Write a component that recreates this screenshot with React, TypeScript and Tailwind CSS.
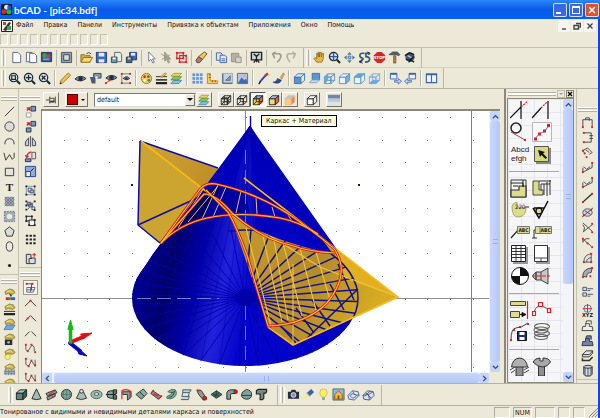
import type { ReactNode } from 'react'

const INK = '#222'
const RED = '#d8202c'
const TEAL = '#7fa39c'
const KHAKI = '#dcdc8c'

interface CubeProps {
  front: string
  top: string
  side: string
  line?: string
  wire?: boolean
}

function Cube({ front, top, side, line = INK, wire }: CubeProps) {
  return (
    <g stroke={line} strokeWidth="1" strokeLinejoin="round">
      <path d="M1.5 5.5h7v7h-7z" fill={front} />
      <path d="M1.5 5.5l3.500-3.500h7.500l-4 3.500z" fill={top} />
      <path d="M8.500 5.500l4-3.500v7l-4 3.500z" fill={side} />
      {wire && <path d="M5 2v7l-3.500 3.500M5 9h7.500" fill="none" />}
    </g>
  )
}

function Magnifier({ children }: { children?: ReactNode }) {
  return (
    <g fill="none" stroke="#1c2833">
      <circle cx="6" cy="6" r="4.500" fill="#dce6e6" strokeWidth="1.300" />
      <path d="M9.500 9.500L13 13" strokeWidth="2.200" />
      {children}
    </g>
  )
}

function Eye({ x = 0, y = 0 }: { x?: number; y?: number }) {
  return (
    <g transform={`translate(${x} ${y})`}>
      <path d="M1 7.500Q6.500 2 13 7Q7 12 1 7.500z" fill="#7c8890" stroke="#333" />
      <circle cx="7" cy="7.300" r="2.400" fill="#1d2e4a" />
    </g>
  )
}

function Squares({ points }: { points: number[][] }) {
  return (
    <>
      {points.map(([x, y]) => (
        <rect key={`${x}-${y}`} x={x - 1} y={y - 1} width="2" height="2" fill={RED} />
      ))}
    </>
  )
}

function Brush({ children }: { children: ReactNode }) {
  return (
    <>
      {children}
      <path d="M2 4l5-3 4 1 2 3-3 2-4-1-3 1z" fill="#c9b24a" stroke="#6b5a20" strokeWidth=".6" />
      <path d="M4 4l4-1 2 2" stroke="#f6e9a0" fill="none" />
    </>
  )
}

const ICONS: Record<string, ReactNode> = {
  new: <path d="M3 1.500h5.500l3 3v8h-8.500z" fill="#fff" stroke="#54657c" />,
  template: (
    <g fill="#fff" stroke="#54657c">
      <path d="M1.500 1.500h6v10h-6z" />
      <path d="M5 2.500h5l2.500 2.500v7.500h-7.500z" />
    </g>
  ),
  picture: (
    <>
      <path d="M1.500 1.500h11v10h-11z" fill="#30508c" stroke="#2c3440" />
      <circle cx="5" cy="5" r="2.500" fill="#4b9a4c" />
      <path d="M7 4h4v4h-4z" fill="#d23a2c" />
      <path d="M3 8h7v2h-7z" fill="#58a7e0" />
    </>
  ),
  frame: (
    <>
      <path d="M1.500 1.500h11v11h-11z" fill="#8ea0ad" stroke="#4a5560" />
      <path d="M4 4h6v6h-6z" fill="#dcdcdc" stroke="#3a4550" />
    </>
  ),
  open: (
    <>
      <path d="M1 4h4l1 1h5v7h-10z" fill="#d9ac3c" stroke="#93701c" />
      <path d="M1 12l3-5h9.500l-3 5z" fill="#f7dc7c" stroke="#93701c" />
      <path d="M7 3q2.500-2.500 5 0" stroke="#345" fill="none" />
    </>
  ),
  save: (
    <>
      <path d="M1.500 1.500h11v11h-11z" fill="#4068c0" stroke="#243c78" />
      <path d="M4 2h6v4h-6zM4 9h6v3.500h-6z" fill="#e6ecf6" />
    </>
  ),
  saveDoc: (
    <>
      <path d="M5 1.500h6l1.500 2v8h-7.500z" fill="#e8f0dc" stroke="#54657c" />
      <path d="M1.500 6.500h6v6h-6z" fill="#6f97a8" stroke="#2c4a60" />
      <path d="M3 7h3v2h-3z" fill="#fff" />
    </>
  ),
  saveAll: (
    <>
      <path d="M5 1.500h7.500v8h-7.500z" fill="#4068c0" stroke="#243c78" />
      <path d="M6.500 2h4.500v3h-4.500z" fill="#e6ecf6" />
      <path d="M1.500 6.500h6v6h-6z" fill="#4a6a90" stroke="#1c3454" />
      <path d="M3 7h3v2h-3z" fill="#d8e070" />
    </>
  ),
  cursor: <path d="M4 1v10l2.500-2 2 4 1.500-1-2-3.500h3z" fill="#fff" stroke="#6a7a8c" />,
  cursorOff: (
    <>
      <path d="M5 1v10l2-2 2 4 1.500-1-2-3.500h3z" fill="#aaa79a" stroke="#9a978a" />
      <path d="M1 3l9 6M2 9l9-5" stroke="#9a978a" />
    </>
  ),
  groupPick: (
    <>
      <path d="M2 2h7v6h-7zM5 5h7v7h-7z" fill="none" stroke={RED} strokeWidth="1.200" />
      <Squares points={[[2, 2], [9, 2], [2, 8], [12, 5], [12, 12], [5, 12], [9, 8]]} />
    </>
  ),
  eraser: (
    <>
      <path d="M1 10l3-4 4 3-3 3.500h-3z" fill="#c0766a" stroke="#444" />
      <path d="M4 6l6-5 3 2-5 6z" fill="#f2c95a" stroke="#6b5420" />
    </>
  ),
  copy: (
    <g fill="#dfe9fa" stroke="#3f64a4">
      <path d="M1.500 2h5l1.500 2v6h-6.500z" />
      <path d="M5.500 4.500h5l2 2v6h-7z" />
      <path d="M7 8.500h4M7 10.500h4" />
    </g>
  ),
  paste: (
    <g fill="#b5b2a4" stroke="#959284">
      <path d="M1.500 2.500h8v9h-8z" />
      <path d="M6 6.500h6v6h-6z" fill="#d4d1c4" />
    </g>
  ),
  screen: (
    <>
      <path d="M1.500 1.500h11v8h-11z" fill="#cfd6da" stroke={INK} strokeWidth="1.500" />
      <path d="M4 3l3 3 3-3M7 6v6M4 12.500l3-4 3 4" stroke={INK} fill="none" strokeWidth="1.400" />
    </>
  ),
  undo: <path d="M3 3h7q2.500 1 1.500 4t-4 5M6 1l-3 2 2 5" stroke="#a09d90" strokeWidth="1.800" fill="none" />,
  redo: <path d="M11 3h-7q-2.500 1-1.500 4t3 5M8 1l3 2-2 5" stroke="#b5b2a5" strokeWidth="1.800" fill="none" />,
  hand: (
    <path
      d="M4 12l-3-4 1-1 2 1.500v-6h1.500v4-5h1.500v5l.5-5h1.500v5l1-4h1.500l-.500 6-1.500 3.500z"
      fill="#e8b84c"
      stroke="#8a6418"
      strokeWidth=".8"
    />
  ),
  zoomLive: (
    <Magnifier>
      <path d="M6 2v8M2 6h8" stroke="#2858b0" strokeWidth="1.500" />
    </Magnifier>
  ),
  move: (
    <>
      <path d="M7 1l2.500 3h-5zM7 13l2.500-3h-5zM1 7l3-2.500v5zM13 7l-3-2.500v5z" fill="#5478a8" />
      <path d="M5.500 5.500h3v3h-3z" fill="#a9bcd4" stroke="#5478a8" />
    </>
  ),
  spin: (
    <g stroke="#3c5878" strokeWidth="1.800" fill="none">
      <path d="M7 2.500q-5-.5-5 2t2.500 3-1.500 4h-2M12.500 2.500h-4v3.500q4 0 4 3t-5 3" />
      <path d="M4 9l-2 3 3 1M10 1l3 1.500-2 2" stroke="#223" strokeWidth="1" />
    </g>
  ),
  stop: (
    <>
      <path d="M4.500 1h5l3.500 3.500v5l-3.500 3.500h-5l-3.500-3.500v-5z" fill="#d2282e" />
      <text x="7" y="8.500" fontSize="4.500" fontWeight="bold" textAnchor="middle" fill="#fff">STOP</text>
    </>
  ),
  hammer: (
    <>
      <path d="M1 4l4-3h5l3 3-2 1-2-1h-8z" fill="#55606a" stroke="#2c3238" strokeWidth=".6" />
      <path d="M6 5h2.500v8h-2.500z" fill="#b08040" stroke="#5c4020" strokeWidth=".6" />
    </>
  ),
  binder: (
    <>
      <circle cx="7.500" cy="6.500" r="5" fill="#46586a" />
      <path d="M2 5l5-3 5 2M3 9l4 1 5-4M6 12l3-2 3 2" stroke="#16202a" fill="none" strokeWidth="1.500" />
      <path d="M5 5l4 2" stroke="#bccad4" strokeWidth="1.500" />
    </>
  ),
  zoomWindow: (
    <Magnifier>
      <path d="M4 4h4v4h-4z" strokeWidth="1.200" />
    </Magnifier>
  ),
  zoomAll: (
    <Magnifier>
      <path d="M6 3v6M3 6h6" strokeWidth="1.400" />
    </Magnifier>
  ),
  zoomFit: (
    <Magnifier>
      <path d="M4 4l4 4M8 4l-4 4" strokeWidth="1.400" />
    </Magnifier>
  ),
  pencil: (
    <>
      <path d="M1 13l1-4 8-8 2.500 2.500-8 8z" fill="#f0c04c" stroke="#8a6416" strokeWidth=".8" />
      <path d="M1 13l.5-2 1.500 1.500z" fill="#222" />
    </>
  ),
  eye: <Eye />,
  eyeBox: (
    <>
      <path d="M5 1.500h8v5h-8z" fill="#8494a4" stroke="#3c4854" />
      <path d="M1 5.500h6v7h-4z" fill="#4a5a6a" />
      <circle cx="8" cy="6" r="1.500" fill="#dce4ec" />
    </>
  ),
  eyeNode: (
    <>
      <Eye x={1} y={-1} />
      <path d="M2 12l4-3" stroke={RED} />
      <Squares points={[[2, 12], [6, 9]]} />
    </>
  ),
  eyeAxis: (
    <>
      <path d="M3 2v10h10M3 2h9" stroke="#777" fill="none" />
      <path d="M4.500 7q4-4 7 0-3 3-7 0z" fill="#7c8890" stroke="#333" />
      <circle cx="8" cy="7" r="1.200" fill="#1d2e4a" />
      <Squares points={[[3, 2], [3, 12], [12, 12], [12, 2]]} />
    </>
  ),
  palette: (
    <>
      <circle cx="7" cy="7" r="5.500" fill="#f0cc5c" stroke="#96742a" />
      <circle cx="5" cy="5" r="1.400" fill="#c83434" />
      <circle cx="9" cy="5" r="1.400" fill="#3864b8" />
      <circle cx="9.500" cy="9" r="1.400" fill="#2e8c4c" />
      <circle cx="5" cy="9" r="1.300" fill="#fff" />
    </>
  ),
  lineWeight: (
    <>
      <path d="M1 5h12" stroke={INK} />
      <path d="M1 8.500h12" stroke={INK} strokeWidth="1.600" />
      <path d="M1 12h12" stroke={INK} strokeWidth="2.400" />
      <path d="M6 5l5-4 1.500 1-5 4z" fill="#f0c04c" stroke="#8a6416" strokeWidth=".6" />
    </>
  ),
  layers: (
    <g strokeWidth=".7">
      <path d="M1 12.500l3-3.500h8.500l-3 3.500z" fill="#7cc4e8" stroke="#2c6c94" />
      <path d="M1 8.500l3-3.500h8.500l-3 3.500z" fill="#84c860" stroke="#3c7c28" />
      <path d="M1 4.500l3-3h8.500l-3 3z" fill="#e8d860" stroke="#8c8428" />
    </g>
  ),
  grid: (
    <>
      <path d="M1.500 1.500h11v11h-11z" fill="#6c94cc" />
      <path d="M1 5h12M1 9h12M5 1v12M9 1v12" stroke="#e6eefa" />
    </>
  ),
  ruler: (
    <>
      <path d="M1.500 1.500h3v8h8v3h-11z" fill="#f4cc60" stroke="#c08820" />
      <path d="M3 3h2M3 6h2M7 9v2M10 9v2" stroke="#7c5a18" />
    </>
  ),
  image1: (
    <>
      <path d="M1.500 1.500h11v11h-11z" fill="#c4d2dc" stroke="#9cacbc" />
      <path d="M2 2v10h10" stroke="#3c5068" fill="none" />
      <path d="M5 9l5-5v5z" fill="#8c9cb0" stroke="#5c7088" />
    </>
  ),
  image2: (
    <>
      <path d="M1.500 1.500h11v11h-11z" fill="#b0c8e8" stroke="#4c6c9c" />
      <path d="M2 12l4-6 3 3 2-2 1.500 5z" fill="#3c6cb0" />
      <circle cx="9" cy="4" r="1.600" fill="#f4a468" />
    </>
  ),
  dropper: (
    <>
      <path d="M3 11l6-7" stroke="#284c9c" strokeWidth="2" />
      <path d="M8 3l3-2.500 1.500 2-3 3z" fill="#d42c28" />
      <path d="M2 13l1.500-2.500" stroke={INK} strokeWidth="1.500" />
    </>
  ),
  paint: (
    <>
      <path d="M9 6l3-5 1.500 1-3 6z" fill="#e8b848" stroke="#7c5a18" strokeWidth=".5" />
      <path d="M1 11q4 0 5-4l4 2q-2 5-9 2z" fill="#2c4c9c" stroke="#162c60" strokeWidth=".6" />
    </>
  ),
  viewFront: <Cube front="#5c94d0" top="#dcecf8" side="#dcecf8" line="#3c74ac" />,
  viewBack: (
    <>
      <path d="M4.500 1.500h8v7h-8z" fill="#5c94d0" stroke="#3c74ac" />
      <path d="M1.500 11.500l3-3h8l-3 3z" fill="#c4daf0" stroke="#7ca4d0" />
    </>
  ),
  viewLeft: (
    <>
      <Cube front="none" top="none" side="none" line="#5c94c4" wire />
      <path d="M1.500 5.500l3.500-3.500v7l-3.500 3.500z" fill="#6ca4dc" />
    </>
  ),
  viewRight: <Cube front="#e8f4fc" top="#e8f4fc" side="#7cb0e0" line="#5c94c4" />,
  viewTop: <Cube front="#e8f4fc" top="#6ca4dc" side="#e8f4fc" line="#5c94c4" />,
  viewBottom: (
    <>
      <Cube front="none" top="none" side="none" line="#7cacd4" wire />
      <path d="M1.500 12.500l3.500-3.500h7.500l-4 3.500z" fill="#6ca4dc" />
    </>
  ),
  windowNext: (
    <>
      <path d="M1.500 1.500h7v6h-7z" fill="#e8f0fc" stroke="#3c64a8" />
      <path d="M1.500 2h7" stroke="#3c64a8" strokeWidth="2" />
      <path d="M6 9h4v-2l3.500 3-3.500 3v-2h-4z" fill="#bcd4f0" stroke="#3c64a8" strokeWidth=".8" />
    </>
  ),
  windowPrev: (
    <>
      <path d="M5.500 1.500h7v6h-7z" fill="#e8f0fc" stroke="#3c64a8" />
      <path d="M5.500 2h7" stroke="#3c64a8" strokeWidth="2" />
      <path d="M8 9h-4v-2l-3.500 3 3.500 3v-2h4z" fill="#bcd4f0" stroke="#3c64a8" strokeWidth=".8" />
    </>
  ),
  tile: (
    <>
      <path d="M1.500 2.500h11v9h-11zM7 2v9" fill="#eef4fc" stroke="#3c64a8" strokeWidth="1.200" />
      <path d="M1 2.500h12" stroke="#3c64a8" strokeWidth="2" />
    </>
  ),
  pin: (
    <g stroke="#333" fill="none">
      <path d="M1 7h4M5.500 3v8M5.500 5h5v4.500h-5M12 3v8" />
      <path d="M6 8.500h5" strokeWidth="1.500" />
    </g>
  ),
  cubeWire: (
    <>
      <Cube front="none" top="none" side="none" wire />
      <path d="M1.500 9h7l4-4M5 5.500v7M3 4h7v7" stroke={INK} fill="none" strokeWidth=".7" />
    </>
  ),
  cubeFrame: <Cube front="none" top="none" side="none" wire />,
  cubeBoth: <Cube front="#f4d030" top="#70b0e0" side="#e85c38" wire />,
  cubeSolid: <Cube front="#f4d878" top="#a0c0e8" side="#ec6438" />,
  cubeSoft: <Cube front="#fcd080" top="#a8c8e8" side="#f08058" line="#f0b878" />,
  cubeEmpty: <Cube front="#fff" top="#fff" side="#eee" />,
  shade: (
    <>
      <path d="M0 1h14v12h-14z" fill="#b8c8d4" />
      <path d="M0 1h14v4h-14z" fill="#7484a4" />
      <path d="M0 9h14v4h-14z" fill="#dce4e4" />
    </>
  ),
  line: <path d="M2 12l10-10" stroke="#333" />,
  circle: <circle cx="7" cy="7" r="5" fill="#dcdcd4" stroke="#3c3c3c" />,
  arc: <path d="M2 10q0-6 5-6t5 6" stroke="#333" fill="none" />,
  poly: <path d="M1 3l2 8 4-6 3 5 2-2v-5" stroke="#333" fill="none" />,
  rect: <path d="M2.500 3.500h9v8h-9z" stroke="#333" fill="#e4e4dc" />,
  text: <text x="7" y="11.500" textAnchor="middle" fontSize="12" fontWeight="bold" fontFamily="Liberation Serif, serif" fill="#222">T</text>,
  hatch: (
    <>
      <path d="M2 2h10v10h-10z" fill="#a0a8b4" />
      <path d="M2 2l10 10M5 2l7 7M9 2l3 3M2 5l7 7M2 9l3 3M12 2l-10 10M9 2l-7 7M12 5l-7 7M12 9l-3 3M5 2l-3 3" stroke="#56606e" strokeWidth=".6" />
    </>
  ),
  hatchHole: (
    <>
      <path d="M1.500 1.500h11v11h-11z" fill="#9ca8bc" stroke="#5c6c84" strokeDasharray="1.500 1.500" />
      <circle cx="7" cy="7" r="3" fill="#ece9d8" />
    </>
  ),
  penta: <path d="M7 2l5 4-2 6h-6l-2-6z" stroke="#333" fill="#dcdcd4" />,
  ellipse: <ellipse cx="7" cy="7" rx="3.500" ry="5" stroke="#333" fill="#eceadc" />,
  dot: <circle cx="7" cy="7" r="1.700" fill="#222" />,
  copyObj: (
    <>
      <path d="M7.500 1.500h5v5h-5z" fill="#7c94c0" stroke="#26344c" />
      <path d="M2.500 8.500h5v4.500h-5z" fill="#fff" stroke="#999" />
      <path d="M3 6l3-3M3 3h3v3" stroke={RED} strokeWidth="1.400" fill="none" />
    </>
  ),
  moveObj: (
    <>
      <path d="M7.500 1.500h5v5h-5zM2.500 8.500h5v4.500h-5z" fill="#7c94c0" stroke="#26344c" />
      <path d="M3 6l3-3M3 3h3v3" stroke={RED} strokeWidth="1.400" fill="none" />
    </>
  ),
  mirror: (
    <>
      <path d="M5 3v8.500h-3.500v-4zM9 3v8.500h3.500v-4z" fill="#c4ccd8" stroke="#3c4654" />
      <path d="M7 1v12" stroke="#555" />
    </>
  ),
  rotate: (
    <>
      <path d="M8.500 2.500h4v7h-4z" fill="#e4e4e4" stroke="#555" />
      <path d="M1.500 9.500h6v3h-6z" fill="#7c94c0" stroke="#26344c" />
      <path d="M3 8q0-5 5-6M1.500 5.500l1.500 2.500 2-1.500" stroke={RED} fill="none" strokeWidth="1.200" />
    </>
  ),
  scale: (
    <>
      <path d="M1.500 1.500h11v11h-11z" fill="#90acdc" stroke="#26447c" />
      <path d="M2 7h5v5.500h-5z" fill="#e4ecf8" stroke="#26447c" />
      <path d="M7.500 6.500l3-3" stroke={INK} />
    </>
  ),
  group: (
    <g stroke={INK} fill="none">
      <path d="M2.500 2.500h9v9h-9z" stroke="#8894a8" />
      <path d="M4.500 4.500h4v4h-4z" stroke="#3c5078" />
      <path d="M6.500 6.500h4v3h-4z" fill="#a8b4cc" stroke="#3c5078" />
      <path d="M1.500 2.500h2M10.500 2.500h2M1.500 11.500h2M10.500 11.500h2" strokeWidth="2" />
    </g>
  ),
  ungroup: (
    <g stroke="#3c5078" fill="none">
      <path d="M3.500 3.500h4v3h-4zM5 5.500h4v3h-4z" fill="#a8b4cc" />
      <path d="M8.500 8.500h3v3h-3z" />
      <path d="M1.500 2.500h2M1.500 11.500h2M10.500 2.500h2M10.500 12h2M1.500 7h2" stroke={INK} strokeWidth="2" />
      <path d="M10 4l-3 2M4 11l2-2" />
    </g>
  ),
  regroup: (
    <g stroke={INK} fill="none">
      <path d="M2.500 2.500h6v5h-6z" />
      <path d="M5.500 6.500h6v6h-6z" fill="#f4f4f0" />
      <path d="M1.500 2.500h2M7.500 2.500h2M1.500 7.500h2M4.500 12h2M10.500 12h2M10.500 6.500h2" strokeWidth="2" />
    </g>
  ),
  array: (
    <path
      d="M2 3h2.500M6 3h2.500M10 3h2.500M2 7h2.500M6 7h2.500M10 7h2.500M2 11h2.500M6 11h2.500M10 11h2.500"
      stroke={INK}
      strokeWidth="2"
    />
  ),
  insert: (
    <>
      <path d="M2.500 2.500h5v4h4.500v6h-9.500z" fill="#d4dce4" stroke="#333" />
      <path d="M5.500 12v-5h3" stroke="#333" fill="none" />
      <path d="M11 1v4M9 3h4" stroke={RED} strokeWidth="1.200" />
    </>
  ),
  snapGrid: (
    <>
      <path d="M3 7h9l-2 5h-7zM7 7v5M3 9.500h8" fill="none" stroke="#58687c" />
      <path d="M2 3h8M8 3v7" stroke="#444" />
      <Squares points={[[3, 3], [9, 3]]} />
    </>
  ),
  snapEnd: (
    <>
      <path d="M1 11l6-6 6 6" stroke="#333" fill="none" />
      <Squares points={[[7, 5]]} />
    </>
  ),
  snapMid: (
    <>
      <path d="M1 11l6-6 6 6" stroke="#333" fill="none" />
      <Squares points={[[4, 8]]} />
    </>
  ),
  snapNear: <path d="M1 11l5-5M8 6l5 5" stroke="#333" fill="none" />,
  snapCurve: (
    <>
      <path d="M2 4v5q1 3 3 1l3-5q2-1 3 2v4" stroke="#555" fill="none" />
      <Squares points={[[2, 4], [4, 11], [8, 4], [12, 12]]} />
    </>
  ),
  snapNode: (
    <>
      <path d="M2 3v6l3 2 3-6 4 6v-7" stroke="#555" fill="none" />
      <Squares points={[[2, 3], [5, 11], [8, 5], [12, 10]]} />
    </>
  ),
  brushColor: (
    <Brush>
      <path d="M3 10h4v3h-4z" fill={RED} />
      <path d="M6 10h4v3h-4z" fill="#3ca048" />
      <path d="M9 10h4v3h-4z" fill="#3058c8" />
      <path d="M7 5l2 4" stroke="#444" strokeWidth="2" />
    </Brush>
  ),
  brushLine: <Brush><path d="M1 9h12" stroke={INK} /><path d="M1 12h12" stroke={INK} strokeWidth="2.400" /></Brush>,
  brushLayer: <Brush><path d="M1 12.500l3-5h9l-3 5z" fill="#6ca8e4" stroke="#2c64a4" strokeWidth=".7" /></Brush>,
  brushCam: <Brush><path d="M2 7h8v6h-8z" fill="#26303c" /><circle cx="6" cy="10" r="1.500" fill="#aab" /></Brush>,
  brushLamp: <Brush><circle cx="5" cy="9.500" r="3" fill="#f8f060" stroke="#b0a030" strokeWidth=".6" /></Brush>,
  brushHatch: (
    <Brush>
      <path d="M1 7h12v6h-12z" fill="#b8c0c8" />
      <path d="M1 9h12M1 11h12M3 7v6M6 7v6M9 7v6M12 7v6" stroke="#667080" strokeWidth=".7" />
    </Brush>
  ),
  dimHor: (
    <>
      <path d="M2 12v-8h10v8M5 4v-2h4v3" stroke="#444" fill="none" />
      <Squares points={[[2, 12], [12, 12]]} />
    </>
  ),
  dimVer: (
    <>
      <path d="M3 2h8v10h-8M9 5h4M9 8h4" stroke="#444" fill="none" />
      <Squares points={[[3, 2], [3, 12]]} />
    </>
  ),
  dimRot: (
    <>
      <path d="M2 5l5-3 5 5M2 5l2 3M5 4l4 3M12 7l-3 2" stroke="#444" fill="none" />
      <Squares points={[[2, 5], [4, 8], [6, 12]]} />
    </>
  ),
  dimSlope: (
    <>
      <path d="M2 7v5l10-5v-5M3 6l3 3M6 9l4-3" stroke="#444" fill="none" />
      <Squares points={[[2, 12], [12, 2]]} />
    </>
  ),
  dimLine: (
    <>
      <path d="M2 12l10-9" stroke="#222" strokeWidth="1.300" />
      <Squares points={[[2, 12], [12, 3]]} />
    </>
  ),
  dimDia: (
    <>
      <ellipse cx="7" cy="7" rx="5" ry="4" fill="#d0d4dc" stroke="#555" />
      <path d="M1 12l12-10M4 5l6 4" stroke="#444" />
      <Squares points={[[3, 10], [11, 4]]} />
    </>
  ),
  dimAngle: (
    <>
      <path d="M2 2l10 9M2 12l10-8M2 4q3 3 1 7" stroke="#444" fill="none" />
      <Squares points={[[12, 3], [12, 12]]} />
    </>
  ),
  dimRadius: (
    <>
      <path d="M2 7q1-5 7-4M3 4l8 7M2 2v4" stroke="#444" fill="none" />
      <Squares points={[[7, 8], [12, 12], [2, 3]]} />
    </>
  ),
  dimArc: (
    <>
      <path d="M3 12q0-8 8-9v9zM6 12q0-4 5-5" stroke="#555" fill="#e0e0dc" />
      <Squares points={[[3, 12], [11, 3], [11, 12]]} />
    </>
  ),
  dimArc2: (
    <>
      <path d="M2 11q0-8 10-9l-1 5q-5 0-5 5z" stroke="#444" fill="#a4acb8" />
      <Squares points={[[2, 12], [12, 2], [10, 11]]} />
    </>
  ),
  props: (
    <g stroke="#44546c" fill="#d4dcec">
      <path d="M2 2.500h4v3.500h-4zM2 8.500h4v3.500h-4z" />
      <path d="M7 4h6M7 10h6M7 6h3M7 12h3" />
    </g>
  ),
  xyz: (
    <>
      <circle cx="7" cy="5" r="4" fill="none" stroke="#4c70a8" />
      <path d="M7 0v9M2 5h10" stroke={RED} />
      <text x="7" y="14" textAnchor="middle" fontSize="6" fontWeight="bold" fill="#222">XYZ</text>
    </>
  ),
  stamp: <path d="M5 5h4v3h3l1 4.500h-12l1-4.500h3zM5 5l1-3h5v4" stroke="#444" fill="#f0eee4" />,
  stampDark: <path d="M5 5h4v3h3l1 4.500h-12l1-4.500h3zM5 5l1-3h5v4" stroke="#26344c" fill="#7484a8" />,
  slab: (
    <>
      <path d="M1.500 6l4-4h7l-3.500 4zM1.500 6v2.500h7.500l3.500-4v-2.500" fill="#dce0e8" stroke="#333" />
      <path d="M1.500 10v2.500h7.500l3.500-4" fill="none" stroke="#333" strokeWidth="1.600" />
    </>
  ),
  barrel: (
    <>
      <path d="M3 3v8l2 2h5l2-2v-8z" fill="#8894a8" stroke="#333" />
      <ellipse cx="7.500" cy="3" rx="4.500" ry="1.600" fill="#c4ccd8" stroke="#333" />
      <path d="M6 5v7M9 5v7" stroke="#e0e6f0" />
    </>
  ),
  box3d: <Cube front="#5c8480" top="#a4c4bc" side="#3c5c58" />,
  cone3d: <path d="M7 1l-5 10.500q5 2 10 0z" fill="#a4bcb4" stroke={INK} />,
  plate3d: (
    <>
      <path d="M1 6l10-4 2 3-10 4zM2 10l9-4v3l-8 4z" fill={TEAL} stroke="#333" />
      <path d="M2 9l9-6M4 4l5 6" stroke={RED} />
    </>
  ),
  sphere3d: (
    <>
      <circle cx="7" cy="7" r="5.500" fill="#7ca49c" stroke="#333" />
      <path d="M7 1.500v11M2 7h10M4 3q-2 4 0 8M10 3q2 4 0 8" stroke="#486c64" fill="none" strokeWidth=".7" />
    </>
  ),
  frustum3d: (
    <>
      <path d="M5 4l-3.500 7q5.500 3 11 0l-3.500-7z" fill="#a8bcb8" stroke="#333" />
      <circle cx="7" cy="3.500" r="2" fill="#dce6e0" stroke="#333" />
    </>
  ),
  torus3d: (
    <>
      <ellipse cx="7" cy="7" rx="6" ry="4.500" fill="#a0b8b4" stroke="#48605c" />
      <ellipse cx="7" cy="6.500" rx="2.500" ry="1.500" fill="#ece9d8" stroke="#48605c" />
    </>
  ),
  lathe3d: (
    <>
      <path d="M6 3h3v8h-3q-4 0-4-4t4-4z" fill={TEAL} stroke={INK} />
      <path d="M9 2h3.500v4l-2 1 2 1v4h-3.500z" fill="#58746e" stroke={INK} />
      <path d="M1 7h10" stroke={INK} />
    </>
  ),
  sweep3d: (
    <>
      <path d="M3 4l8 0v7l-3 2v-6h-5z" fill={TEAL} stroke="#333" />
      <path d="M2 12v-9q5-3 10 1v6" stroke={RED} fill="none" strokeWidth="1.200" />
    </>
  ),
  ext3d: (
    <>
      <path d="M1 7l4-3 5 5-3 3z" fill={TEAL} stroke="#333" />
      <path d="M5 4l4-3 4 5-3 3z" fill="#8cb0a8" stroke="#333" />
    </>
  ),
  loft3d: (
    <>
      <path d="M3 3l9 6-3 3-8-6z" fill={TEAL} stroke="#333" />
      <path d="M1 6l3-4M9 12l4-4M4 6l5 3" stroke={RED} strokeWidth="1.500" />
    </>
  ),
  mesh3d: (
    <>
      <path d="M3 4q4-4 8-2 3 4-1 8-4 3-8 1-1-2 2-3t3-2-4-2z" fill={TEAL} stroke="#48706a" />
      <path d="M4 10q5 0 6-6M6 5q4 0 5-2" stroke="#2c4c48" fill="none" />
    </>
  ),
  spring3d: (
    <path d="M3 2h9l-2 3h-7zM3 5l-1 4h8l-1 3.500h-8M10 5l-1 4" fill="#c4d4d8" stroke="#3c5864" />
  ),
  bolt3d: (
    <>
      <path d="M2 2l5 1 5 8-3 2-5-6z" fill={TEAL} stroke="#333" />
      <circle cx="10.500" cy="11" r="2.200" fill={RED} stroke="#511" strokeWidth=".6" />
      <path d="M2 4l4-2" stroke={RED} strokeWidth="1.500" />
    </>
  ),
  surf3d: <path d="M1 7l6-4 6 4-6 4zM7 3l-1 8M3 6l7 3M10 5l-6 4" fill="#4c6c64" stroke="#26423c" />,
  pipe3d: (
    <>
      <path d="M2 12v-7q1-3 4-3h5v4h-4q-1 0-1 2v4z" fill={TEAL} stroke={INK} />
      <circle cx="11.500" cy="4" r="2" fill={RED} stroke="#511" strokeWidth=".6" />
    </>
  ),
  blob3d: <path d="M7 1.500q6 1 5.500 6t-6 4.500q-5-1-5-4.500t5.500-6zM2 8h10" fill={TEAL} stroke="#333" />,
  text3d: <path d="M1.500 3l2-1.500h9v2.500l-1 1.500h-2v5.500l-1.500 1.500h-2.500v-6h-4z" fill="#6c8c84" stroke={INK} strokeWidth="1.200" />,
  camera: (
    <>
      <path d="M1 4h3l1-2h4l1 2h3v7.500h-12z" fill="#26303c" />
      <circle cx="7" cy="7.500" r="2.600" fill="#8494a4" stroke="#dde" />
    </>
  ),
  spot: (
    <>
      <path d="M6 5l4-3.500 2.500 3-4.500 4z" fill="#3c5cc8" stroke="#1c3484" strokeWidth=".6" />
      <path d="M1 12.500l3-7 4 3z" fill="#f4f080" />
      <path d="M5 5l4 4" stroke="#8898b8" strokeWidth="1.400" />
    </>
  ),
  bulb: (
    <>
      <path d="M7 1q4 0 4 4 0 2-2.500 5h-3q-2.500-3-2.500-5 0-4 4-4z" fill="#fcf060" stroke="#c0a830" strokeWidth=".7" />
      <path d="M5.500 10h3v3h-3z" fill="#98a0a8" />
    </>
  ),
  house: (
    <>
      <path d="M1 1h12v12h-12z" fill="#84b8e8" stroke="#4c7454" />
      <path d="M1 9h12v4h-12z" fill="#5ca44c" />
      <path d="M3 7l4-4 4 4v5h-8z" fill="#f0c040" stroke="#b04c2c" />
      <path d="M6 8h2v4h-2z" fill="#7c4c2c" />
    </>
  ),
  teapot: (
    <path d="M1 8l5-5 6 1 1 4-5 5-6-1zM3 8q3-3 6-1t-3 4zM6 3l2 4 5 1" fill="#dce4f4" stroke="#4c6498" />
  ),
  teapot2: (
    <path d="M1 8l5-5 6 1 1 4-5 5-6-1zM1 8l6-1 5-3M7 7l1 6M4 5l6 6M3 9l6-6" fill="#dce4f4" stroke="#44587c" />
  ),
}

interface IconButtonProps {
  name: string
  pressed?: boolean
}

function IconButton({ name, pressed }: IconButtonProps) {
  return (
    <button
      type="button"
      aria-label={name}
      className={`flex h-[15px] w-[15px] shrink-0 items-center justify-center ${
        pressed ? 'border border-[#9d9a8c] bg-[#f6f5ee]' : ''
      }`}
    >
      <svg viewBox="0 0 14 14" className="h-[13px] w-[13px] shrink-0" aria-hidden="true">
        {ICONS[name]}
      </svg>
    </button>
  )
}

function RaisedButton({ name, pressed }: IconButtonProps) {
  return (
    <button
      type="button"
      aria-label={name}
      className={`flex h-[15px] w-4 shrink-0 items-center justify-center border ${
        pressed
          ? 'border-t-[#555] border-r-white border-b-white border-l-[#555] bg-[#f6f5ee]'
          : 'border-t-white border-r-[#77756a] border-b-[#77756a] border-l-white'
      }`}
    >
      <svg viewBox="0 0 14 14" className="h-3 w-3 shrink-0" aria-hidden="true">
        {ICONS[name]}
      </svg>
    </button>
  )
}

function Grip() {
  return (
    <span className="flex h-4 shrink-0 gap-px px-px">
      <i className="w-px bg-white" />
      <i className="w-px bg-[#b5b2a2]" />
      <i className="w-px bg-white" />
    </span>
  )
}

function RailGrip() {
  return (
    <span className="mx-px mb-[3px] flex h-[5px] shrink-0 flex-col justify-between">
      <i className="h-[2px] border-t border-white bg-[#b5b2a2]" />
      <i className="h-[2px] border-t border-white bg-[#b5b2a2]" />
    </span>
  )
}

interface IconGroupsProps {
  groups: string[][]
  wide?: boolean
}

function IconGroups({ groups, wide }: IconGroupsProps) {
  return (
    <>
      {groups.map((group, i) => (
        <div key={group[0]} className="flex items-center">
          {i > 0 && (
            <i className={`mx-[2px] h-4 border-l border-[#bab7a8] bg-white ${wide ? 'w-[2px]' : 'w-px'}`} />
          )}
          {group.map((name) => (
            <IconButton key={name} name={name} />
          ))}
        </div>
      ))}
    </>
  )
}

const TOOLBAR_FILE = [
  ['new', 'template', 'picture'],
  ['frame'],
  ['open', 'save', 'saveDoc', 'saveAll'],
  ['cursor', 'cursorOff', 'groupPick'],
  ['eraser'],
  ['copy', 'paste'],
  ['screen'],
  ['undo', 'redo'],
]

const TOOLBAR_NAV = [['hand', 'zoomLive', 'move', 'spin', 'stop', 'hammer', 'binder']]

const TOOLBAR_VIEW = [
  ['zoomWindow', 'zoomAll', 'zoomFit'],
  ['pencil', 'eye', 'eyeBox', 'eyeNode', 'eyeAxis'],
  ['palette', 'lineWeight', 'layers'],
  ['grid', 'ruler', 'image1', 'image2'],
  ['dropper', 'paint'],
  ['viewFront', 'viewBack', 'viewLeft', 'viewRight', 'viewTop', 'viewBottom'],
  ['windowNext', 'windowPrev'],
  ['tile'],
]

const TOOLBAR_3D = [
  [
    'box3d', 'cone3d', 'plate3d', 'sphere3d', 'frustum3d', 'torus3d', 'lathe3d', 'sweep3d', 'ext3d',
    'loft3d', 'mesh3d', 'spring3d', 'bolt3d', 'surf3d', 'pipe3d', 'blob3d', 'text3d',
  ],
]

const TOOLBAR_SCENE = [['camera', 'spot', 'bulb', 'house', 'teapot', 'teapot2']]

const MENU = [
  'Файл',
  'Правка',
  'Панели',
  'Инструменты',
  'Привязка к объектам',
  'Приложения',
  'Окно',
  'Помощь',
]

function TitleBar() {
  return (
    <header className="flex h-[19px] items-center bg-linear-to-b from-[#2a86f8] via-[#0a5ae8] to-[#0560f4] px-px">
      <svg viewBox="0 0 12 12" className="mr-[2px] h-[11px] w-[11px]" aria-hidden="true">
        <path d="M0 0h12v12h-12z" fill="#10181c" />
        <circle cx="6" cy="3.500" r="2.700" fill="#dfe8f8" />
        <circle cx="3" cy="8.500" r="2.700" fill="#d8282c" />
        <circle cx="8.500" cy="8.500" r="2.800" fill="#28b048" />
        <path d="M7 2h4v4h-4z" fill="#3054d0" />
      </svg>
      <h1 className="flex-1 font-['Lato',sans-serif] text-[10px] leading-3 font-bold text-white">
        bCAD - [pic34.bdf]
      </h1>
      <div className="flex gap-[2px]">
        <button type="button" aria-label="Свернуть" className="flex h-[14px] w-[14px] items-end rounded-[2px] border border-white/80 bg-[#3a68e0] p-[2px]">
          <i className="h-[2px] w-[5px] bg-white" />
        </button>
        <button type="button" aria-label="Развернуть" className="flex h-[14px] w-[14px] items-center justify-center rounded-[2px] border border-white/80 bg-[#3a68e0]">
          <i className="h-2 w-2 border border-t-2 border-white" />
        </button>
        <button type="button" aria-label="Закрыть" className="flex h-[14px] w-[14px] items-center justify-center rounded-[2px] border border-white/80 bg-[#e0502c]">
          <svg viewBox="0 0 8 8" className="h-2 w-2" aria-hidden="true">
            <path d="M1 1l6 6M7 1l-6 6" stroke="#fff" strokeWidth="1.600" />
          </svg>
        </button>
      </div>
    </header>
  )
}

function MenuBar() {
  return (
    <nav className="flex h-[13px] items-center pr-[2px] pl-px">
      <svg viewBox="0 0 12 12" className="mr-[3px] h-3 w-3" aria-hidden="true">
        <path d="M.5 .5h11v11h-11z" fill="#f4f4f0" stroke="#222" />
        <path d="M2 10l6-8 2 1-5 8z" fill="#333" />
        <path d="M6 6h4v4h-4z" fill="#48a058" />
        <path d="M2 2h3v3h-3z" fill="#c84838" />
      </svg>
      <ul className="flex flex-1 gap-[10px]">
        {MENU.map((item) => (
          <li key={item}>
            <button type="button" className="block leading-[13px] whitespace-nowrap">{item}</button>
          </li>
        ))}
      </ul>
      <div className="flex gap-px">
        {['M2 7h4', 'M3 1.500h4.500v3.500h-1M1 3.500h4.500v3.500h-4.500z', 'M1.500 1.500l5 5M6.500 1.500l-5 5'].map((d, i) => (
          <button
            key={d}
            type="button"
            aria-label={['Свернуть документ', 'Восстановить документ', 'Закрыть документ'][i]}
            className="flex h-3 w-3 items-center justify-center bg-[#f5f4ee]"
          >
            <svg viewBox="0 0 8 8" className="h-2 w-2" aria-hidden="true">
              <path d={d} fill="none" stroke="#444" strokeWidth="1.400" />
            </svg>
          </button>
        ))}
      </div>
    </nav>
  )
}

function PropertyBar() {
  return (
    <div className="flex h-5 shrink-0 items-center pt-px pl-[2px]">
      <RaisedButton name="pin" />
      <button
        type="button"
        aria-label="Цвет"
        className="ml-[6px] flex h-[15px] w-[23px] items-center gap-[3px] border border-t-white border-r-[#77756a] border-b-[#77756a] border-l-white px-px"
      >
        <i className="h-[11px] w-[11px] border border-[#500] bg-[#c80000]" />
        <i className="border-x-2 border-t-2 border-x-transparent border-t-black" />
      </button>
      <div className="relative ml-[6px] h-[14px] w-[102px]">
        <select
          aria-label="Слой"
          className="block h-full w-full appearance-none border border-t-[#777] border-r-[#ddd] border-b-[#ddd] border-l-[#777] bg-white pl-[2px] leading-3"
        >
          <option>default</option>
        </select>
        <span className="pointer-events-none absolute inset-y-px right-px flex w-[10px] items-center justify-center border border-t-white border-r-[#77756a] border-b-[#77756a] border-l-white bg-[#ece9d8]">
          <i className="border-x-[3px] border-t-[3px] border-x-transparent border-t-black" />
        </span>
      </div>
      <RaisedButton name="layers" />
      <div className="ml-[6px] flex">
        <RaisedButton name="cubeWire" />
        <RaisedButton name="cubeFrame" />
        <RaisedButton name="cubeBoth" pressed />
        <RaisedButton name="cubeSolid" />
        <RaisedButton name="cubeSoft" />
      </div>
      <div className="ml-[6px] flex gap-[6px]">
        <RaisedButton name="cubeEmpty" />
        <RaisedButton name="shade" />
      </div>
    </div>
  )
}

const CENTER = { x: 245, y: 298 }
const GRID_STEP = 22.7

function ellipsePoint(deg: number) {
  const a = (deg * Math.PI) / 180
  return { x: CENTER.x + 113 * Math.cos(a), y: CENTER.y + 68 * Math.sin(a) }
}

function Drawing() {
  const dots: ReactNode[] = []
  for (let i = 0; i < 26; i++) {
    for (let j = 0; j < 14; j++) {
      const x = Math.round(64 + i * GRID_STEP)
      const y = Math.round(117 + j * GRID_STEP)
      dots.push(<rect key={`${i}-${j}`} x={x} y={y} width="1" height="1" fill="#808080" />)
    }
  }
  const spokes = Array.from({ length: 36 }, (_, i) => ellipsePoint(i * 10 + 3))

  return (
    <svg className="h-full w-full" role="img" aria-label="Конус и пирамида">
      <defs>
        <linearGradient id="base" gradientUnits="userSpaceOnUse" x1="132" x2="358" y1="270" y2="320">
          <stop offset="0" stopColor="#00009c" />
          <stop offset=".16" stopColor="#000068" />
          <stop offset=".28" stopColor="#0000a8" />
          <stop offset=".4" stopColor="#2222dc" />
          <stop offset=".52" stopColor="#0404cc" />
          <stop offset="1" stopColor="#0000c4" />
        </linearGradient>
        <linearGradient id="wing" x1="0" x2="1" y1="0" y2=".3">
          <stop offset="0" stopColor="#d0a838" />
          <stop offset="1" stopColor="#c09028" />
        </linearGradient>
        <linearGradient id="face" x1="0" x2="1" y1="0" y2=".4">
          <stop offset="0" stopColor="#c89c28" />
          <stop offset=".6" stopColor="#b48c2c" />
          <stop offset="1" stopColor="#d8ac20" />
        </linearGradient>
        <clipPath id="prism">
          <path d="M229 212q30 26 104 42l-12-16 77 59-105 48-25-19-26-77z" />
        </clipPath>
      </defs>

      <g transform="translate(-42 -111)">
        {dots}
        <path d="M245.500 111v270M42 298.500h447" stroke="#8c8c8c" />
        <path d="M471.500 111v270" stroke="#808080" />

        {/* left part of the pyramid */}
        <path d="M140 141L218 168 206 195 160 243 138 225z" fill="#cca430" />
        <path d="M140 141L218 168 206 190z" fill="url(#wing)" />
        <path d="M140 141L218 168M140 141L138 225 160 243M138 225L208 193" stroke="#0c0ca8" strokeWidth="1.500" fill="none" />

        {/* cone */}
        <path d="M250.500 116v12" stroke="#0000a0" strokeWidth="1.400" />
        <path d="M250 126L204 188 153 254 136 280 245 320 355 280 343 258z" fill="#0000be" />
        <path d="M250 128L222 236 256 236z" fill="#1c1ccc" opacity=".5" />
        <path d="M161 243L153 254 136 280 150 310 245 320 350 290 338 256 250 262 230 214 207 218Q180 224 161 243z" fill="url(#base)" />
        <ellipse cx="245" cy="298" rx="113" ry="68" fill="url(#base)" />
        <path d="M205 190L163 244Q180 225 204 219L222 186z" fill="#00005c" />
        <path d="M222 186L200 220Q225 213 250 214L246 194z" fill="#0000a0" />
        <g stroke="#0000a8" strokeWidth=".9">
          {spokes.map((p) => (
            <path key={`${p.x}`} d={`M${CENTER.x} ${CENTER.y}L${p.x} ${p.y}`} />
          ))}
          {spokes
            .filter((p) => p.y > 280)
            .map((p) => (
              <path key={`${p.y}-a`} d={`M250 126L${p.x} ${p.y}`} opacity=".5" />
            ))}
        </g>
        <circle cx="245" cy="298" r="9" fill="#0000a4" opacity=".7" />
        <path d="M245.500 150v80M137 298.500h82M245.500 306v64" stroke="#6c78d0" strokeDasharray="14 6" />
        <path d="M228 231h40" stroke="#000070" strokeWidth="1.200" />

        {/* right part of the pyramid */}
        <path d="M229 212q30 26 104 42l-12-16 77 59-105 48-25-19-26-77z" fill="url(#face)" />
        <path d="M322 240L398 297 342 278Q344 260 322 240z" fill="#e0b020" />
        <g clipPath="url(#prism)">
          <g stroke="#10108c" strokeWidth="1.500">
            {spokes
              .filter((p) => p.x > 248)
              .map((p) => (
                <path key={`${p.y}`} d={`M${CENTER.x} ${CENTER.y}L${p.x} ${p.y}`} />
              ))}
            <path d="M280 325l16 18M296 308l18 25M312 300l18 26M330 284l14 26M338 264l16 36M300 345l58-56" />
            <ellipse cx="245" cy="298" rx="113" ry="68" fill="none" />
          </g>
          <g stroke="#f4c438" strokeWidth="1.100" fill="none">
            <path d="M232 212L320 267 398 297M246 228L271 326M263 236L282 322M274 240L288 320M283 243L302 316M300 248L316 310M316 252L330 300M293 264v80" />
          </g>
        </g>
        <path d="M244 178L322 238 398 297 293 345 268 327" stroke="#fcb818" strokeWidth="1.600" fill="none" />

        {/* rungs between the two section curves */}
        <path
          d="M188 222l30-36M202 219l16-34M178 228l26-40M213 217l13-30M236 213l5-22M257 214l-1-17M275 217l-3-10M292 221l-4-6"
          stroke="#e8c080"
          fill="none"
        />
        <path d="M141 141L207 192 232 214" stroke="#fcb818" strokeWidth="1.600" fill="none" />

        {/* intersection curves: red outline with an amber core */}
        {[
          { color: '#c41414', width: 2.6 },
          { color: '#fcb838', width: 1.2 },
        ].map(({ color, width }) => (
          <g key={color} stroke={color} strokeWidth={width} fill="none">
            <path d="M161 243L198 192Q204 182 216 184Q262 194 300 222T336 252Q350 275 327 303Q305 325 268 326L247 255Q238 230 228 212L206 190" />
            <path d="M161 243Q180 224 207 218Q240 211 280 218Q300 222 318 234" />
            <path d="M161 243L204 194Q216 194 232 213Q260 238 290 245Q310 252 335 253" />
          </g>
        ))}

        {/* axes */}
        <g strokeLinecap="round">
          <path d="M70 343L80 351" stroke="#0808c0" strokeWidth="4" />
          <path d="M78 348l9 8-8-2z" fill="#0808c0" stroke="#0808c0" />
          <path d="M71 342L83 337" stroke="#e01010" strokeWidth="4" />
          <path d="M81 334l11-1-9 6z" fill="#e01010" stroke="#e01010" />
          <path d="M70.500 342v-14" stroke="#18b818" strokeWidth="3.500" />
          <path d="M68 329l2.500-9 2.500 9z" fill="#18b818" stroke="#18b818" />
        </g>
        <path d="M131 184h2v2h-2zM358 184h2v2h-2z" fill="#10108c" />
      </g>
    </svg>
  )
}

function ScrollButton({ d, label }: { d: string; label: string }) {
  return (
    <button type="button" aria-label={label} className="flex h-[10px] w-[10px] shrink-0 items-center justify-center rounded-[2px] bg-[#c4d4fa]">
      <svg viewBox="0 0 8 8" className="h-[7px] w-[7px]" aria-hidden="true">
        <path d={d} fill="none" stroke="#3c5078" strokeWidth="1.600" />
      </svg>
    </button>
  )
}

const ARROW = {
  up: 'M1 6l3-3 3 3',
  down: 'M1 2l3 3 3-3',
  left: 'M5.500 1l-3 3 3 3',
  right: 'M2.500 1l3 3-3 3',
}

function Canvas() {
  return (
    <div className="grid min-h-0 flex-1 grid-cols-[1fr_11px] grid-rows-[1fr_11px] border-t-2 border-l border-t-[#8c897c] border-l-[#8c897c]">
      <div className="relative min-h-0 overflow-hidden bg-white">
        <div className="absolute inset-0">
          <Drawing />
        </div>
        <span
          role="tooltip"
          className="absolute top-1 left-[219px] border border-black bg-[#ffffe1] px-1 leading-[10px] whitespace-nowrap"
        >
          Каркас + Материал
        </span>
      </div>
      <div className="flex min-h-0 flex-col bg-[#f0f0fa] pl-px">
        <ScrollButton d={ARROW.up} label="Вверх" />
        <i className="flex flex-1 items-center justify-center rounded-[2px] bg-linear-to-r from-[#c8d8fc] to-[#b4c8f6]">
          <i className="h-[5px] w-[5px] border-y border-[#98b0e8]" />
        </i>
        <ScrollButton d={ARROW.down} label="Вниз" />
      </div>
      <div className="flex bg-[#f0f0fa] pt-px">
        <ScrollButton d={ARROW.left} label="Влево" />
        <i className="ml-[2px] flex flex-1 items-center justify-center rounded-[2px] bg-linear-to-b from-[#c8d8fc] to-[#b4c8f6]">
          <i className="h-[5px] w-[5px] border-x border-[#98b0e8]" />
        </i>
        <ScrollButton d={ARROW.right} label="Вправо" />
      </div>
      <div className="bg-[#ece9d8]" />
    </div>
  )
}

const PALETTE: Record<string, ReactNode> = {
  extend: (
    <>
      <path d="M11 1v18M0 18l11-11" stroke="#111" strokeWidth="1.200" fill="none" />
      <path d="M11 7l7-6" stroke={RED} strokeWidth="1.200" strokeDasharray="2 1" />
    </>
  ),
  trim: (
    <>
      <path d="M16 1v18M0 18l9-10" stroke="#111" strokeWidth="1.200" fill="none" />
      <path d="M9 8l6-6" stroke={RED} strokeWidth="1.200" strokeDasharray="2 1" />
    </>
  ),
  tangent: (
    <>
      <circle cx="6" cy="6" r="5" fill="none" stroke="#222" strokeWidth="1.500" />
      <path d="M1 10L15 18" stroke="#a44848" />
      <Squares points={[[15, 18]]} />
    </>
  ),
  spline: (
    <>
      <path d="M.5 .5h19v19h-19z" fill="#f8f8fa" stroke="#b8b8bc" />
      <path d="M3 17l4-5 6-3 4-6" stroke="#3c74b4" fill="none" />
      <path d="M2 15.500h3v3h-3zM6 10.500h3v3h-3zM11 7.500h3v3h-3zM15 2h3v3h-3z" fill={RED} />
    </>
  ),
  abcd: (
    <text fontSize="8" fill="#222" fontFamily="Liberation Sans, sans-serif">
      <tspan x="1" y="8">Abcd</tspan>
      <tspan x="1" y="17">efgh</tspan>
    </text>
  ),
  pick: (
    <>
      <path d="M4 4h15v16h-15z" fill="#888" />
      <path d="M2.500 2.500h14v15h-14z" fill="#d8d880" stroke="#555" />
      <path d="M6 6l7 2-2 1.500 4 4-1.500 1.500-4-4-1.500 2z" fill="#111" />
    </>
  ),
  partA: (
    <>
      <path d="M1 2h15v17h-15z" fill="#f4f4f4" stroke="#333" />
      <path d="M1 12h8v-4h7v11h-15z" fill={KHAKI} stroke="#333" strokeWidth="1.200" />
      <path d="M3 5h10v4M3 8h5M13 2v7M1 5h2" stroke="#222" fill="none" />
    </>
  ),
  partB: (
    <>
      <path d="M1 3h6v9h4v5h-10z" fill={KHAKI} stroke="#444" />
      <path d="M7 3h12M9 6h9M9 6v6M12 6v11M15 4v14M18 2v15" stroke="#333" fill="none" />
    </>
  ),
  sector: (
    <>
      <path d="M2 6q1-3 5-4v5l9 1q0 8-7 9t-7-11z" fill={KHAKI} stroke="#a8a868" />
      <text x="5" y="9" fontSize="6" fill="#222">220</text>
      <path d="M15 7h4" stroke="#222" />
    </>
  ),
  rough: (
    <>
      <path d="M1 8l6 10L16 1M2 8h10" stroke="#111" strokeWidth="1.500" fill="none" />
      <circle cx="7" cy="11" r="3" fill={KHAKI} stroke="#111" strokeWidth="1.300" />
    </>
  ),
  labelA: (
    <>
      <path d="M1 16l7-8h3" stroke="#222" fill="none" strokeWidth="1.200" />
      <path d="M7.500 4.500h12v7h-12z" fill={KHAKI} stroke="#777" />
      <text x="13.500" y="9.800" fontSize="5" textAnchor="middle" fontWeight="bold" fill="#222">ABC</text>
    </>
  ),
  labelB: (
    <>
      <path d="M2 16v-8h3M0 16h5" stroke="#333" fill="none" />
      <path d="M3.500 4.500h16v7h-16zM8 5v6" fill={KHAKI} stroke="#777" />
      <text x="13.700" y="9.800" fontSize="5" textAnchor="middle" fontWeight="bold" fill="#222">ABC</text>
    </>
  ),
  table: (
    <>
      <path d="M3 3h15v17h-15z" fill="#999" />
      <path d="M1.500 1.500h14v16h-14z" fill="#fff" stroke="#222" />
      <path d="M2 4.500h13M2 7.500h13M2 10.500h13M2 13.500h13M6 2v15M11 2v15" stroke="#333" />
    </>
  ),
  page: (
    <>
      <path d="M4 3h14v17h-14z" fill="#999" />
      <path d="M2.500 1.500h13v16h-13z" fill="#fff" stroke="#333" />
      <path d="M3 14h12M9 14v3" stroke="#444" />
    </>
  ),
  mass: (
    <>
      <circle cx="10" cy="10" r="8.500" fill="#fff" stroke="#111" />
      <path d="M10 10v-8.500a8.500 8.500 0 0 1 8.500 8.500zM10 10v8.500a8.500 8.500 0 0 1-8.500-8.500z" fill="#111" />
    </>
  ),
  section: (
    <>
      <path d="M4 6h5l7-4v16l-7-4h-5zM9 6v8M4 6l-3 3v2l3 3z" fill="#c8c8c8" stroke="#444" />
      <path d="M0 10h18" stroke={RED} strokeDasharray="4 1" />
    </>
  ),
  align: (
    <>
      <path d="M.5 1.500h15v4h-15zM.5 11.500h9v6h-9z" fill={KHAKI} stroke="#444" />
      <path d="M17.500 1v18" stroke={RED} strokeWidth="1.200" />
      <path d="M10 14.500h2v-2l4 2-4 2v-2" fill="#111" stroke="#111" />
    </>
  ),
  curve: (
    <>
      <path d="M2 12Q5 4 10 6t8 5" stroke="#555" fill="none" />
      <path d="M.5 11.500h3v4h-3zM6.500 2.500h4v4h-4zM15.500 8.500h3v4h-3z" fill="#fff" stroke={RED} strokeWidth="1.200" />
    </>
  ),
  curveSave: (
    <>
      <path d="M1 18Q1 6 6 6T18 1" stroke="#444" fill="none" />
      <Squares points={[[1, 18], [4, 8], [10, 5], [18, 2]]} />
      <path d="M7.500 9.500h9v9h-9z" fill="#1c2c80" stroke="#111" />
      <path d="M9.500 10h5v3h-5zM9.500 15h5v3h-5z" fill="#fff" />
    </>
  ),
  spring: (
    <g fill="none" stroke="#606060" strokeWidth="1.100">
      <ellipse cx="10" cy="4.500" rx="7.500" ry="3" />
      <ellipse cx="9" cy="8" rx="7" ry="3" />
      <ellipse cx="10" cy="11.500" rx="7.500" ry="3" />
      <ellipse cx="9" cy="15" rx="6.500" ry="2.500" />
    </g>
  ),
  rivet: (
    <>
      <path d="M6 10h7v10h-7z" fill="#909090" stroke="#333" />
      <path d="M1.500 11q1-8.500 8-9 7 .5 8 9z" fill="#b0b0b0" stroke="#333" />
      <path d="M0 14l5-3M1 17l4-3M14 14l5-3M14 17l5-3" stroke="#444" />
    </>
  ),
  screw: (
    <>
      <path d="M6.500 9h6v11h-6z" fill="#909090" stroke="#333" />
      <path d="M1 6q2-4 7-4v3h3v-3q6 0 7.500 4-3 5-8 5t-9.500-5z" fill="#a8a8a8" stroke="#333" />
    </>
  ),
}

const PALETTE_SECTIONS = [
  ['extend', 'trim', 'tangent', 'spline', 'abcd', 'pick'],
  ['partA', 'partB', 'sector', 'rough', 'labelA', 'labelB', 'table', 'page', 'mass', 'section'],
  ['align', 'curve', 'curveSave', 'spring'],
  ['rivet', 'screw'],
]

function PalettePanel() {
  return (
    <aside className="flex w-[70px] shrink-0 flex-col border-l-2 border-[#8c897c] pl-px">
      <div className="flex h-[9px] shrink-0 items-center gap-px pl-px">
        <i className="h-1 flex-1 border-y border-[#b5b2a2] bg-white" />
        <button type="button" aria-label="Меню панели" className="flex h-2 w-2 items-center justify-center border border-[#c0bdae]">
          <i className="border-x-2 border-t-2 border-x-transparent border-t-[#999]" />
        </button>
        <button type="button" aria-label="Закрыть панель" className="flex h-2 w-2 items-center justify-center border border-[#88857a]">
          <svg viewBox="0 0 6 6" className="h-[6px] w-[6px]" aria-hidden="true">
            <path d="M1 1l4 4M5 1l-4 4" stroke="#000" strokeWidth="1.300" />
          </svg>
        </button>
      </div>
      <div className="flex min-h-0 flex-1 overflow-hidden border border-[#8c897c] bg-white">
        <div className="flex-1 overflow-hidden bg-[#f6f6f8] bg-[linear-gradient(#e6e6ee_1px,transparent_1px),linear-gradient(90deg,#e6e6ee_1px,transparent_1px)] bg-size-[13px_13px] pr-1 pl-px">
          {PALETTE_SECTIONS.map((section, i) => (
            <div key={section[0]} className={i > 0 ? 'mt-[6px] border-t border-[#a8a8a8] pt-[5px]' : ''}>
              <div className="grid grid-cols-[22px_22px]">
                {section.map((name) => (
                  <button key={name} type="button" aria-label={name} className="flex h-[22px] items-center justify-center">
                    <svg viewBox="0 0 20 20" className="h-[20px] w-[20px]" aria-hidden="true">
                      {PALETTE[name]}
                    </svg>
                  </button>
                ))}
              </div>
            </div>
          ))}
        </div>
        <div className="flex w-[10px] flex-col bg-[#f4f4fc]">
          <ScrollButton d={ARROW.up} label="Вверх" />
          <i className="flex flex-2 items-center justify-center rounded-[2px] bg-linear-to-r from-[#c8d8fc] to-[#b4c8f6]">
            <i className="h-[5px] w-[5px] border-y border-[#98b0e8]" />
          </i>
          <i className="flex-1" />
          <ScrollButton d={ARROW.down} label="Вниз" />
        </div>
      </div>
    </aside>
  )
}

interface RailProps {
  sections: string[][]
  className?: string
  pressed?: string
}

// An empty name leaves a short gap inside a section.
function Rail({ sections, className = '', pressed }: RailProps) {
  return (
    <div className={`flex min-h-0 shrink-0 flex-col overflow-hidden ${className}`}>
      {sections.map((names) => (
        <div key={names[0]} className="mb-1 flex shrink-0 flex-col border-b border-[#c4c1b2] pb-px">
          <RailGrip />
          {names.map((name, i) =>
            name ? (
              <div key={`${name}-${i}`} className="flex justify-center">
                <IconButton name={name} pressed={name === pressed} />
              </div>
            ) : (
              <i key={i} className="h-1" />
            ),
          )}
        </div>
      ))}
    </div>
  )
}

function StatusBar() {
  return (
    <footer className="flex h-[13px] shrink-0 items-center border-t border-[#b5b2a2]">
      <p className="flex-1 leading-3 whitespace-nowrap">
        Тонированое с видимыми и невидимыми деталями каркаса и поверхностей
      </p>
      <div className="flex gap-[3px]">
        <span className="h-[11px] w-4 border border-t-[#aaa] border-r-white border-b-white border-l-[#aaa]" />
        <span className="h-[11px] w-[19px] border border-t-[#aaa] border-r-white border-b-white border-l-[#aaa] text-center leading-[10px]">
          NUM
        </span>
        <span className="h-[11px] w-5 border border-t-[#aaa] border-r-white border-b-white border-l-[#aaa]" />
        <span className="h-[11px] w-3 border border-t-[#aaa] border-r-white border-b-white border-l-[#aaa]" />
        <span className="h-[11px] w-3 border border-t-[#aaa] border-r-white border-b-white border-l-[#aaa]" />
        <svg viewBox="0 0 10 10" className="h-[10px] w-[10px]" aria-hidden="true">
          <path d="M1 10l9-9M4 10l6-6M7 10l3-3" stroke="#8c897c" />
        </svg>
      </div>
    </footer>
  )
}

export default function App() {
  return (
    <div className="flex h-screen flex-col overflow-hidden bg-[#ece9d8] font-['DejaVu_Sans_Condensed','Noto_Sans',sans-serif] text-[7px] text-[#111]">
      <TitleBar />
      <div className="flex min-h-0 flex-1 flex-col border-r-2 border-[#1048d8]">
        <MenuBar />
        <div className="flex h-4 shrink-0 items-center gap-[2px] border-b border-[#c4c1b2] pb-px">
          {Array.from({ length: 11 }, (_, i) => (
            <i key={i} className="h-[11px] w-2 border border-t-[#c4c1b2] border-r-white border-b-white border-l-[#c4c1b2]" />
          ))}
        </div>
        <div className="flex h-5 shrink-0 items-center border-b border-[#d4d1c2]">
          <Grip />
          <span className="w-[2px]" />
          <IconGroups groups={TOOLBAR_FILE} />
          <i className="mr-px ml-1 h-5 w-px bg-[#bab7a8]" />
          <Grip />
          <IconGroups groups={TOOLBAR_NAV} />
          <i className="ml-1 h-5 w-px bg-[#bab7a8]" />
        </div>
        <div className="flex h-[21px] shrink-0 items-center border-b border-[#b5b2a2]">
          <Grip />
          <IconGroups groups={TOOLBAR_VIEW} wide />
          <i className="ml-1 h-5 w-px bg-[#bab7a8]" />
        </div>

        <div className="flex min-h-0 flex-1">
          <Rail
            className="w-[19px] border-r border-[#c4c1b2] pt-[7px]"
            sections={[
              ['line', 'circle', 'arc', 'poly', 'rect', 'text', 'hatch', 'hatchHole', 'penta', 'ellipse', '', 'dot'],
              ['brushColor', 'brushLine', 'brushLayer', 'brushCam', 'brushLamp', 'brushHatch', 'brushLine'],
            ]}
          />
          <Rail
            className="w-[22px] pt-[7px]"
            pressed="snapGrid"
            sections={[
              ['copyObj', 'moveObj', 'mirror', 'rotate', 'scale', '', 'group', 'ungroup', 'regroup', '', 'array', '', 'insert'],
              ['snapGrid', 'snapEnd', 'snapMid', 'snapNear', 'snapCurve', 'snapNode', 'snapNode'],
            ]}
          />
          <main className="flex min-w-0 flex-1 flex-col">
            <PropertyBar />
            <Canvas />
          </main>
          <div className="ml-1 flex">
            <PalettePanel />
          </div>
          <Rail
            className="ml-[2px] w-[22px] border-l border-[#c4c1b2] pt-[18px]"
            sections={[
              [
                'dimHor', 'dimVer', 'dimRot', 'dimSlope', 'dimSlope', 'dimLine', 'dimDia', 'dimAngle', 'dimRadius',
                'dimArc', 'dimArc2', '', 'props', '', 'xyz', 'stamp', 'stampDark', 'slab', 'barrel',
              ],
            ]}
          />
        </div>

        <div className="flex h-[22px] shrink-0 items-center border-t border-[#b5b2a2]">
          <span className="w-[7px]" />
          <Grip />
          <IconGroups groups={TOOLBAR_3D} />
          <i className="mr-px ml-[8px] h-5 w-px bg-[#bab7a8]" />
          <Grip />
          <IconGroups groups={TOOLBAR_SCENE} />
          <i className="ml-[5px] h-5 w-px bg-[#bab7a8]" />
        </div>
        <StatusBar />
      </div>
    </div>
  )
}
